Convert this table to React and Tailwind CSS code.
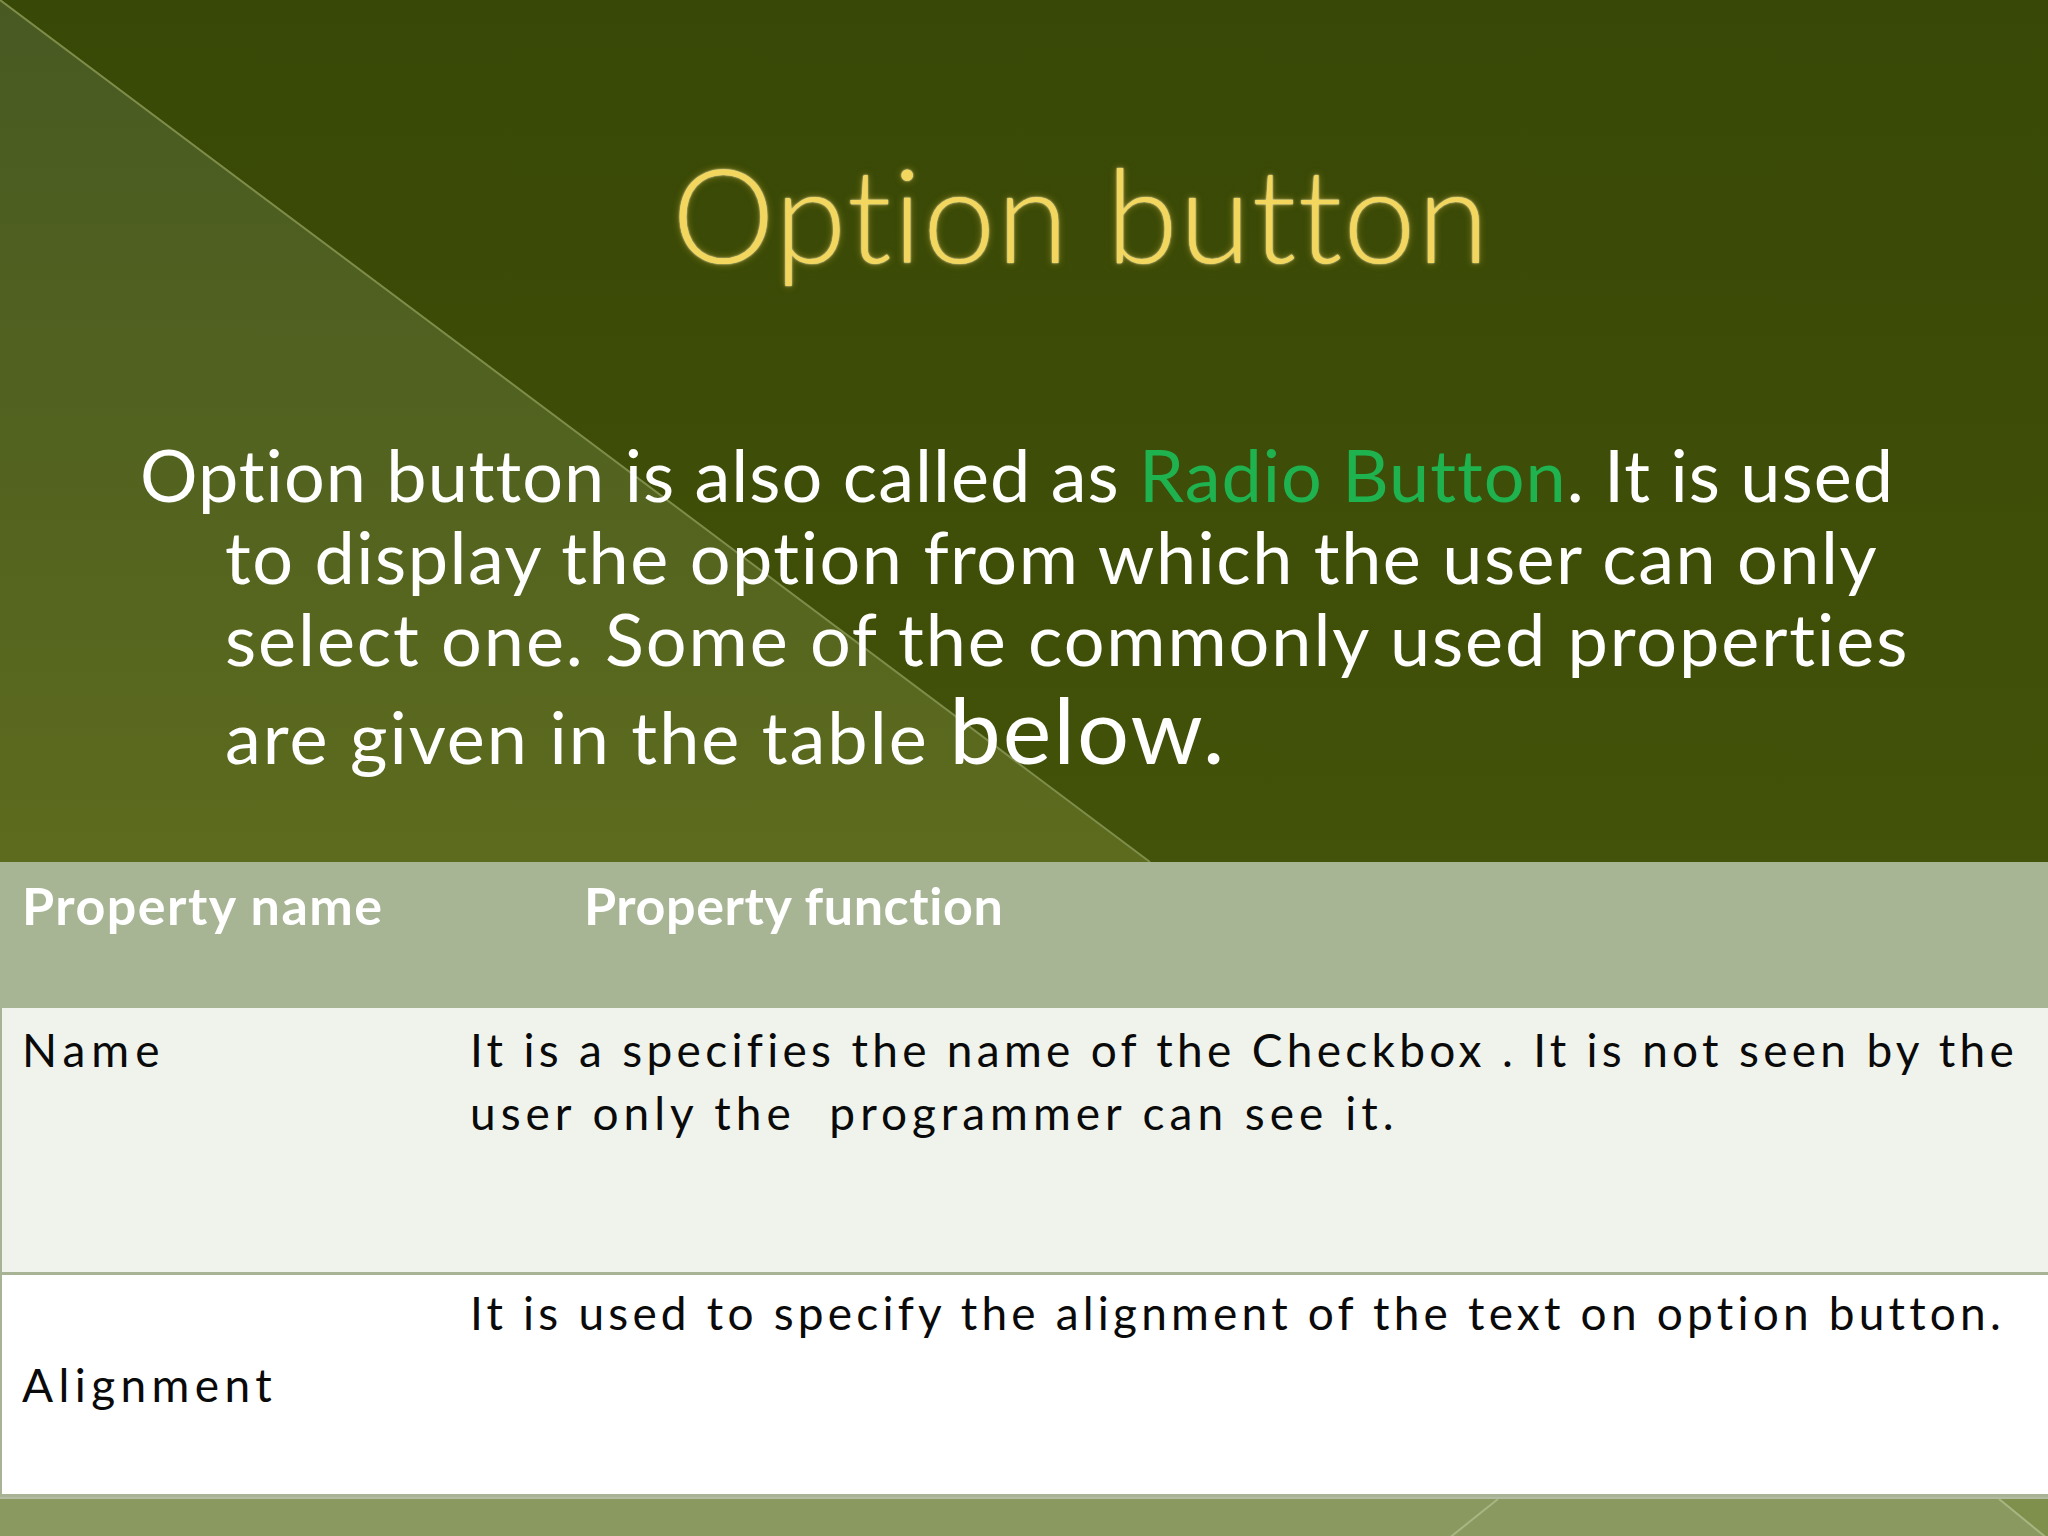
export default function App() {
  return (
    <div className="relative w-[2048px] h-[1536px] overflow-hidden bg-gradient-to-b from-[#384806] to-[#4c5b0c] font-['Lato',sans-serif]">
      {/* lighter triangle behind the slide text */}
      <svg className="absolute left-0 top-0" width="2048" height="862" viewBox="0 0 2048 862">
        <defs>
          <linearGradient id="tri" x1="0" y1="0" x2="0" y2="1">
            <stop offset="0" stopColor="#485a22" />
            <stop offset="1" stopColor="#5c6b1d" />
          </linearGradient>
        </defs>
        <polygon points="0,0 1150,862 0,862" fill="url(#tri)" />
        <line x1="0" y1="0" x2="1150" y2="862" stroke="#7f8d4a" strokeWidth="2" />
      </svg>

      <div className="relative flex flex-col h-full">
        <section className="h-[862px] flex flex-col">
          <h1 className="pt-[148px] pl-[672px] text-[130px] leading-none font-light tracking-[1.3px] text-[#f2d65e] whitespace-nowrap [text-shadow:0_0_2px_#fffbd8,0_0_7px_#d8b03090]">
            Option button
          </h1>
          <div className="mt-[155px] text-[72px] leading-[82px] text-white whitespace-nowrap">
            <div className="pl-[140px] tracking-[1px]">
              Option button is also called as <span className="text-[#1fb350]">Radio Button</span>. It is used
            </div>
            <div className="pl-[225px] tracking-[1.5px]">to display the option from which the user can only</div>
            <div className="pl-[225px] tracking-[1.9px]">select one. Some of the commonly used properties</div>
            <div className="pl-[225px] mt-[4px]">
              <span className="tracking-[2px]">are given in the table </span>
              <span className="text-[92px] leading-none tracking-[2px]">below.</span>
            </div>
          </div>
        </section>

        <div className="flex flex-col">
          <div className="h-[146px] bg-[#a7b594] flex text-white font-bold text-[52px] leading-none tracking-[1px] pt-[17px] whitespace-nowrap">
            <div className="w-[584px] pl-[22px] tracking-[1.5px]">Property name</div>
            <div className="tracking-[0.6px]">Property function</div>
          </div>
          <div className="h-[267px] bg-[#eff3ec] border-l-2 border-b-[3px] border-[#a8b294] flex text-[46px] leading-[63px] tracking-[4.3px] text-[#0a0a0a] pt-[10px]">
            <div className="w-[468px] pl-[20px] tracking-[6px]">Name</div>
            <div className="flex-1 whitespace-nowrap">
              <div>It is a specifies the name of the Checkbox . It is not seen by the</div>
              <div className="tracking-[5px]">user only the&nbsp; programmer can see it.</div>
            </div>
          </div>
          <div className="h-[222px] bg-white border-l-2 border-b-[3px] border-[#a8b294] flex text-[46px] leading-[63px] tracking-[4.2px] text-[#0a0a0a]">
            <div className="w-[468px] pl-[20px] flex items-center tracking-[5.4px]">Alignment</div>
            <div className="flex-1 whitespace-nowrap pt-[6px]">It is used to specify the alignment of the text on option button.</div>
          </div>
        </div>

        <div className="relative flex-1 bg-[#8a9960] border-t-2 border-[#b3bba2]">
          <svg className="absolute left-0 top-0" width="2048" height="40" viewBox="0 0 2048 40">
            <polygon points="1999,0 2048,0 2048,40" fill="#7f904c" />
            <line x1="1498" y1="0" x2="1448" y2="40" stroke="#a9b582" strokeWidth="2" />
            <line x1="1999" y1="0" x2="2048" y2="40" stroke="#a9b582" strokeWidth="2" />
          </svg>
        </div>
      </div>
    </div>
  );
}
